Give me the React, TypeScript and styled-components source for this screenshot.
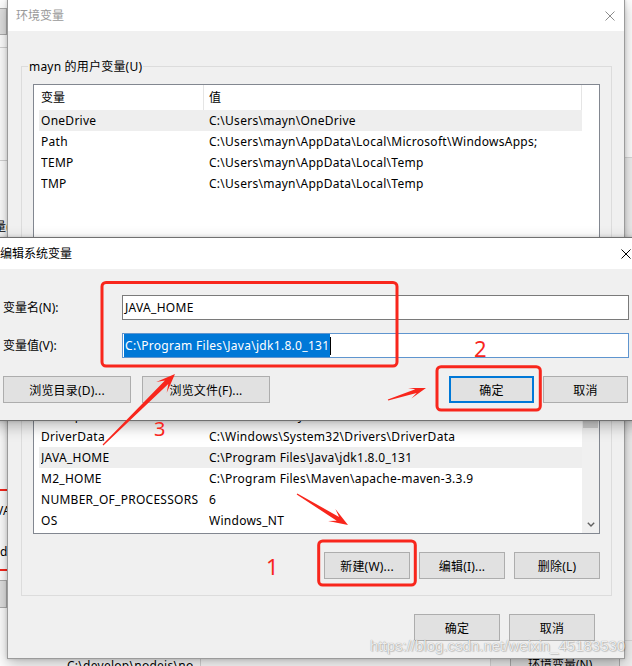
import React from "react";
import styled, { createGlobalStyle } from "styled-components";

const RED = "#f8261c";
const UI_FONT = `"Noto Sans", "Noto Sans CJK SC", sans-serif`;

const GlobalStyle = createGlobalStyle`
  *, *::before, *::after { box-sizing: border-box; }
  html, body { margin: 0; padding: 0; }
  body {
    width: 632px;
    height: 666px;
    overflow: hidden;
    background: #ffffff;
    font-family: ${UI_FONT};
    font-size: 12px;
    color: #000;
  }
`;

const Desktop = styled.div`
  position: relative;
  width: 632px;
  height: 666px;
  overflow: hidden;
  background: #ffffff;
`;

/* ---------- windows behind (desktop clutter) ---------- */
const BackSheet = styled.div<{ $x: number; $y: number; $w: number; $h: number }>`
  position: absolute;
  left: ${(p) => p.$x}px;
  top: ${(p) => p.$y}px;
  width: ${(p) => p.$w}px;
  height: ${(p) => p.$h}px;
  background: #f0f0f0;
  border-top: 1px solid #d9d9d9;
  border-left: 1px solid #d9d9d9;
`;

const BackButton = styled.div<{ $x: number; $y: number; $w: number; $h: number }>`
  position: absolute;
  left: ${(p) => p.$x}px;
  top: ${(p) => p.$y}px;
  width: ${(p) => p.$w}px;
  height: ${(p) => p.$h}px;
  background: #e1e1e1;
  border: 1px solid #adadad;
  display: flex;
  align-items: center;
  justify-content: center;
  white-space: nowrap;
`;

const BackRule = styled.div<{ $x: number; $y: number; $w: number }>`
  position: absolute;
  left: ${(p) => p.$x}px;
  top: ${(p) => p.$y}px;
  width: ${(p) => p.$w}px;
  height: 1px;
  background: #d4d4d4;
`;

const BackText = styled.span<{ $x: number; $y: number; $w?: number }>`
  position: absolute;
  left: ${(p) => p.$x}px;
  top: ${(p) => p.$y}px;
  ${(p) => (p.$w ? `width: ${p.$w}px; overflow: hidden;` : "")}
  line-height: 21px;
  letter-spacing: 0.27px;
  white-space: nowrap;
`;

const BackRedMark = styled.div<{ $y: number }>`
  position: absolute;
  left: 0;
  top: ${(p) => p.$y}px;
  width: 8px;
  height: 2px;
  background: ${RED};
`;

/* ---------- window chrome ---------- */
const Window = styled.div<{ $x: number; $y: number; $w: number; $h?: number; $active?: boolean }>`
  position: absolute;
  left: ${(p) => p.$x}px;
  top: ${(p) => p.$y}px;
  width: ${(p) => p.$w}px;
  ${(p) => (p.$h ? `height: ${p.$h}px;` : "")}
  display: flex;
  flex-direction: column;
  background: #f0f0f0;
  border: 1px solid ${(p) => (p.$active ? "#707070" : "#9b9b9b")};
  box-shadow: 0 5px 14px rgba(0, 0, 0, 0.28), 0 0 3px rgba(0, 0, 0, 0.16);
`;

const TitleBar = styled.div<{ $active?: boolean; $padL: number; $padR: number }>`
  flex: none;
  height: 31px;
  display: flex;
  align-items: center;
  justify-content: space-between;
  padding: 0 ${(p) => p.$padR}px 0 ${(p) => p.$padL}px;
  background: #ffffff;
  color: ${(p) => (p.$active ? "#000" : "#999")};
`;

const TitleText = styled.span`
  font-size: 12px;
  line-height: 16px;
  white-space: nowrap;
`;

const CloseIcon = ({ color }: { color: string }) => (
  <svg width="10" height="10" viewBox="0 0 10 10">
    <path d="M0.5 0.5 L9.5 9.5 M9.5 0.5 L0.5 9.5" stroke={color} strokeWidth="1" fill="none" />
  </svg>
);

/* ---------- main window body ---------- */
const MainBody = styled.div`
  flex: 1;
  display: flex;
  flex-direction: column;
  padding: 35px 12px 17px 13px;
`;

const Group = styled.section<{ $mt?: number }>`
  position: relative;
  margin-top: ${(p) => p.$mt ?? 0}px;
  border: 1px solid #dcdcdc;
  padding: 17px 11px 16px 11px;
  display: flex;
  flex-direction: column;
`;

const GroupLabel = styled.span`
  position: absolute;
  top: -9px;
  left: 6px;
  padding: 0 1px;
  background: #f0f0f0;
  line-height: 17px;
  letter-spacing: 0.2px;
  white-space: nowrap;
`;

const ListBox = styled.div<{ $h: number }>`
  height: ${(p) => p.$h}px;
  border: 1px solid #828790;
  background: #ffffff;
  display: grid;
  grid-template-columns: 1fr 17px;
  overflow: hidden;
`;

const ListMain = styled.div`
  display: flex;
  flex-direction: column;
  min-width: 0;
  overflow: hidden;
`;

const HeaderRow = styled.div`
  flex: none;
  height: 25px;
  display: grid;
  grid-template-columns: 170px 378px;
`;

const HeaderCell = styled.div<{ $pad: number }>`
  padding-left: ${(p) => p.$pad}px;
  line-height: 25px;
  border-right: 1px solid #e5e5e5;
  white-space: nowrap;
`;

const Row = styled.div<{ $selected?: boolean }>`
  flex: none;
  height: 21px;
  margin-left: 5px;
  padding-left: 2px;
  display: grid;
  grid-template-columns: 168px 1fr;
  align-items: center;
  background: ${(p) => (p.$selected ? "#eeeeee" : "transparent")};
`;

const Cell = styled.span`
  line-height: 21px;
  letter-spacing: 0.27px;
  white-space: nowrap;
  overflow: hidden;
`;

const ScrollTrack = styled.div`
  display: flex;
  flex-direction: column;
  background: #f0f0f0;
`;

const ScrollArrow = styled.div`
  flex: none;
  height: 17px;
  display: flex;
  align-items: center;
  justify-content: center;
`;

const ScrollThumb = styled.div<{ $offset: number; $size: number }>`
  flex: none;
  margin: ${(p) => p.$offset}px 1px 0 1px;
  height: ${(p) => p.$size}px;
  background: #cdcdcd;
`;

const ScrollFill = styled.div`
  flex: 1;
`;

const Chevron = ({ up }: { up?: boolean }) => (
  <svg width="8" height="5" viewBox="0 0 8 5">
    <path
      d={up ? "M0.8 4.2 L4 1 L7.2 4.2" : "M0.8 0.8 L4 4 L7.2 0.8"}
      stroke="#606060"
      strokeWidth="1.4"
      fill="none"
    />
  </svg>
);

const ButtonRow = styled.div<{ $mt: number; $gap: number; $pr?: number }>`
  display: flex;
  justify-content: flex-end;
  gap: ${(p) => p.$gap}px;
  margin-top: ${(p) => p.$mt}px;
  padding-right: ${(p) => p.$pr ?? 0}px;
`;

const Button = styled.button<{ $w: number; $default?: boolean }>`
  flex: none;
  width: ${(p) => p.$w}px;
  height: 27px;
  padding: 0;
  margin: 0;
  background: #e1e1e1;
  border: 1px solid ${(p) => (p.$default ? "#0078d7" : "#adadad")};
  box-shadow: ${(p) => (p.$default ? "inset 0 0 0 1px #0078d7" : "none")};
  font-family: ${UI_FONT};
  font-size: 12px;
  letter-spacing: 0.2px;
  color: #000;
  white-space: nowrap;
`;

/* ---------- edit dialog ---------- */
const DialogBody = styled.div`
  display: flex;
  flex-direction: column;
  padding: 26px 13px 17px 11px;
`;

const FieldGrid = styled.div`
  display: grid;
  grid-template-columns: 119px 1fr;
  row-gap: 13px;
  align-items: center;
`;

const FieldLabel = styled.label`
  white-space: nowrap;
  line-height: 17px;
`;

const TextBox = styled.div<{ $focused?: boolean }>`
  height: 25px;
  display: flex;
  align-items: center;
  padding-left: 2px;
  background: #ffffff;
  border: 1px solid ${(p) => (p.$focused ? "#5f95cf" : "#7a7a7a")};
  letter-spacing: 0.3px;
  white-space: nowrap;
  overflow: hidden;
`;

const Selection = styled.span`
  margin-left: -1px;
  padding: 0 1px;
  line-height: 23px;
  background: #0078d7;
  color: #ffffff;
`;

const Caret = styled.span`
  flex: none;
  width: 1px;
  height: 18px;
  background: #000;
`;

const DialogButtons = styled.div`
  display: flex;
  justify-content: space-between;
  margin-top: 18px;
  padding-right: 1px;
`;

const ButtonGroup = styled.div<{ $gap: number }>`
  display: flex;
  gap: ${(p) => p.$gap}px;
`;

/* ---------- overlay ---------- */
const Watermark = styled.span`
  position: absolute;
  left: 370px;
  top: 638px;
  font-family: "Liberation Sans", Arial, sans-serif;
  font-size: 15px;
  line-height: 15px;
  color: rgba(255, 255, 255, 0.85);
  text-shadow: 0 0 1px rgba(0, 0, 0, 0.45), 1px 1px 1px rgba(0, 0, 0, 0.15);
  white-space: nowrap;
  pointer-events: none;
`;

const Overlay = styled.svg`
  position: absolute;
  left: 0;
  top: 0;
  width: 632px;
  height: 666px;
  pointer-events: none;
`;

function arrowPoints(
  x1: number,
  y1: number,
  x2: number,
  y2: number,
  head: number,
  wing: number,
  shaft: number
): string {
  const dx = x2 - x1;
  const dy = y2 - y1;
  const len = Math.hypot(dx, dy);
  const ux = dx / len;
  const uy = dy / len;
  const nx = -uy;
  const ny = ux;
  const nk = head * 0.62;
  const neckX = x2 - ux * nk;
  const neckY = y2 - uy * nk;
  const baseX = x2 - ux * head;
  const baseY = y2 - uy * head;
  const pts: number[][] = [
    [x1 + nx * 0.5, y1 + ny * 0.5],
    [neckX + nx * shaft, neckY + ny * shaft],
    [baseX + nx * wing, baseY + ny * wing],
    [x2, y2],
    [baseX - nx * wing, baseY - ny * wing],
    [neckX - nx * shaft, neckY - ny * shaft],
    [x1 - nx * 0.5, y1 - ny * 0.5],
  ];
  return pts.map((p) => p.map((v) => v.toFixed(1)).join(",")).join(" ");
}

type Variable = [string, string];

const userVars: Variable[] = [
  ["OneDrive", "C:\\Users\\mayn\\OneDrive"],
  ["Path", "C:\\Users\\mayn\\AppData\\Local\\Microsoft\\WindowsApps;"],
  ["TEMP", "C:\\Users\\mayn\\AppData\\Local\\Temp"],
  ["TMP", "C:\\Users\\mayn\\AppData\\Local\\Temp"],
];

const systemVars: Variable[] = [
  ["CLASSPATH", ".;%JAVA_HOME%\\lib;%JAVA_HOME%\\lib\\tools.jar"],
  ["asl.log", "Destination=file"],
  ["ComSpec", "C:\\WINDOWS\\system32\\cmd.exe"],
  ["DriverData", "C:\\Windows\\System32\\Drivers\\DriverData"],
  ["JAVA_HOME", "C:\\Program Files\\Java\\jdk1.8.0_131"],
  ["M2_HOME", "C:\\Program Files\\Maven\\apache-maven-3.3.9"],
  ["NUMBER_OF_PROCESSORS", "6"],
  ["OS", "Windows_NT"],
];

function ListView({
  height,
  rows,
  selected,
  scroll,
}: {
  height: number;
  rows: Variable[];
  selected: number;
  scroll?: boolean;
}) {
  return (
    <ListBox $h={height}>
      <ListMain>
        <HeaderRow>
          <HeaderCell $pad={7}>变量</HeaderCell>
          <HeaderCell $pad={5}>值</HeaderCell>
        </HeaderRow>
        {rows.map(([name, value], i) => (
          <Row key={name} $selected={i === selected}>
            <Cell>{name}</Cell>
            <Cell>{value}</Cell>
          </Row>
        ))}
      </ListMain>
      {scroll ? (
        <ScrollTrack>
          <ScrollArrow>
            <Chevron up />
          </ScrollArrow>
          <ScrollThumb $offset={5} $size={68} />
          <ScrollFill />
          <ScrollArrow>
            <Chevron />
          </ScrollArrow>
        </ScrollTrack>
      ) : (
        <div />
      )}
    </ListBox>
  );
}

function Backdrop() {
  return (
    <>
      <BackButton $x={-60} $y={8} $w={67} $h={27} />
      <BackRule $x={0} $y={47} $w={8} />
      <BackRule $x={0} $y={160} $w={8} />
      <BackText $x={-6} $y={216}>量(</BackText>
      <BackRedMark $y={489} />
      <BackText $x={-15} $y={500}>JAVA</BackText>
      <BackText $x={0} $y={541}>d</BackText>
      <BackRedMark $y={569} />
      <BackButton $x={-60} $y={580} $w={67} $h={28} />
      <BackSheet $x={600} $y={157} $w={40} $h={520} />
      <BackSheet $x={490} $y={640} $w={150} $h={30} />
      <BackButton $x={510} $y={650} $w={110} $h={27}>
        环境变量(N)...
      </BackButton>
      <BackText $x={67} $y={655} $w={126}>
        C:\develop\nodejs\node_global
      </BackText>
      <BackSheet $x={200} $y={640} $w={1} $h={30} />
    </>
  );
}

function Annotations() {
  return (
    <Overlay viewBox="0 0 632 666">
      <g fill="none" stroke={RED} strokeWidth="3">
        <rect x="102" y="282.5" width="295" height="83.5" rx="4" />
        <rect x="437" y="366.7" width="103.3" height="43.3" rx="4" />
        <rect x="318.7" y="541" width="96.6" height="44" rx="4" />
      </g>
      <g fill={RED}>
        <polygon points={arrowPoints(103, 445, 175, 374, 19, 7.5, 2.4)} />
        <polygon points={arrowPoints(388, 400, 426, 388, 17, 5.5, 2)} />
        <polygon points={arrowPoints(297, 494, 348, 525, 19, 7, 2.3)} />
      </g>
      <g fill={RED} fontFamily={UI_FONT}>
        <text x="474" y="357" fontSize="22">2</text>
        <text x="154" y="436" fontSize="20">3</text>
        <text x="266" y="575" fontSize="22">1</text>
      </g>
    </Overlay>
  );
}

export default function App() {
  return (
    <>
      <GlobalStyle />
      <Desktop>
        <Backdrop />

        <Window $x={7} $y={-1} $w={618} $h={660}>
          <TitleBar $padL={8} $padR={9}>
            <TitleText>环境变量</TitleText>
            <CloseIcon color="#8c8c8c" />
          </TitleBar>
          <MainBody>
            <Group>
              <GroupLabel>mayn 的用户变量(U)</GroupLabel>
              <ListView height={161} rows={userVars} selected={0} />
              <ButtonRow $mt={18} $gap={9}>
                <Button $w={86}>新建(N)...</Button>
                <Button $w={86}>编辑(E)...</Button>
                <Button $w={86}>删除(D)</Button>
              </ButtonRow>
            </Group>
            <Group $mt={12}>
              <GroupLabel>系统变量(S)</GroupLabel>
              <ListView height={197} rows={systemVars} selected={4} scroll />
              <ButtonRow $mt={18} $gap={9}>
                <Button $w={86}>新建(W)...</Button>
                <Button $w={86}>编辑(I)...</Button>
                <Button $w={86}>删除(L)</Button>
              </ButtonRow>
            </Group>
            <ButtonRow $mt={18} $gap={9} $pr={17}>
              <Button $w={86}>确定</Button>
              <Button $w={86}>取消</Button>
            </ButtonRow>
          </MainBody>
        </Window>

        <Window $x={-9} $y={237} $w={652} $active>
          <TitleBar $active $padL={8} $padR={11}>
            <TitleText>编辑系统变量</TitleText>
            <CloseIcon color="#000" />
          </TitleBar>
          <DialogBody>
            <FieldGrid>
              <FieldLabel>变量名(N):</FieldLabel>
              <TextBox>JAVA_HOME</TextBox>
              <FieldLabel>变量值(V):</FieldLabel>
              <TextBox $focused>
                <Selection>C:\Program Files\Java\jdk1.8.0_131</Selection>
                <Caret />
              </TextBox>
            </FieldGrid>
            <DialogButtons>
              <ButtonGroup $gap={11}>
                <Button $w={128}>浏览目录(D)...</Button>
                <Button $w={128}>浏览文件(F)...</Button>
              </ButtonGroup>
              <ButtonGroup $gap={9}>
                <Button $w={85} $default>
                  确定
                </Button>
                <Button $w={85}>取消</Button>
              </ButtonGroup>
            </DialogButtons>
          </DialogBody>
        </Window>

        <Watermark>https://blog.csdn.net/weixin_45183530</Watermark>
        <Annotations />
      </Desktop>
    </>
  );
}
